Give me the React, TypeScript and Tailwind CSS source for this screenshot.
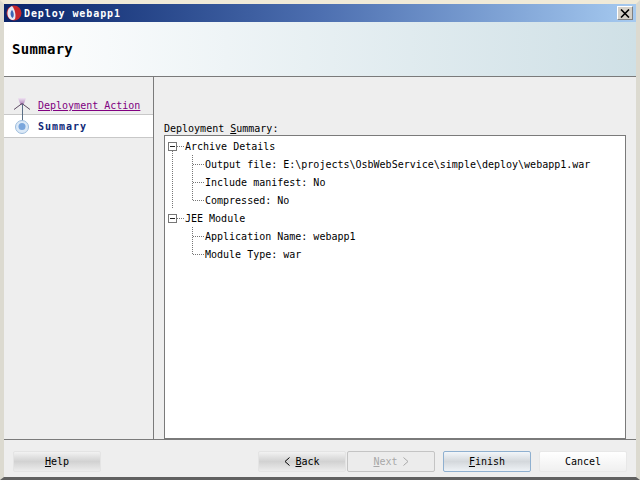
const mono = { fontFamily: '"DejaVu Sans Mono", "Liberation Mono", monospace' };

function AppIcon() {
  return (
    <svg width="16" height="16" viewBox="0 0 16 16" className="shrink-0">
      <circle cx="8" cy="8" r="7.5" fill="#c8262a" />
      <path d="M6 1 C1.5 3 0 9 3 13 C5 15.5 8 15.5 9 14 C10 11 9.5 5 6 1Z" fill="#e4e9f4" />
      <path d="M6 5 C4 7 4 11 6.5 13 C8.5 11.5 8 7 6 5Z" fill="#3c64b4" />
    </svg>
  );
}

function StepIcons() {
  return (
    <svg width="24" height="38" viewBox="0 0 24 38" className="absolute left-[6px] top-[94px]">
      <defs>
        <linearGradient id="flare" x1="0" y1="0" x2="0" y2="1">
          <stop offset="0" stopColor="#f0e4f2" />
          <stop offset="1" stopColor="#a878b4" />
        </linearGradient>
      </defs>
      <path d="M8 0 H16 L13.5 7 H10.5Z" fill="url(#flare)" />
      <path d="M4 11.5 L12 5.5 L20 11.5" stroke="#5c4a62" fill="none" />
      <path d="M12.5 6 V23" stroke="#5a6f86" />
      <circle cx="12" cy="29" r="6.5" fill="#dbe9f7" stroke="#9dbcdc" />
      <circle cx="12" cy="28.5" r="3.5" fill="#7aa6dc" />
    </svg>
  );
}

function TreeRow({ depth, last, open, text }: { depth: number; last?: boolean; open?: boolean; text: string }) {
  return (
    <div className="flex h-[18px] items-center">
      {depth === 0 ? (
        <svg width="20" height="18" viewBox="0 0 20 18" className="shrink-0">
          {open && <path d="M7.5 14 V18" stroke="#777" strokeDasharray="1 1" />}
          <rect x="3.5" y="5.5" width="8" height="8" fill="#fff" stroke="#777" />
          <path d="M5 9.5 H10" stroke="#222" />
          <path d="M12 9.5 H19" stroke="#777" strokeDasharray="1 1" />
        </svg>
      ) : (
        <svg width="40" height="18" viewBox="0 0 40 18" className="shrink-0">
          {open && <path d="M7.5 0 V18" stroke="#777" strokeDasharray="1 1" />}
          <path d={last ? 'M27.5 0 V9' : 'M27.5 0 V18'} stroke="#777" strokeDasharray="1 1" />
          <path d="M28 9.5 H39" stroke="#777" strokeDasharray="1 1" />
        </svg>
      )}
      <span className="whitespace-pre text-[10px] text-black">{text}</span>
    </div>
  );
}

function Button({ children, className }: { children: React.ReactNode; className: string }) {
  return (
    <button className={`flex h-[21px] w-[88px] items-center justify-center whitespace-pre rounded-[2px] text-[10px] ${className}`}>
      {children}
    </button>
  );
}

function Chevron({ flip }: { flip?: boolean }) {
  return (
    <svg width="6" height="9" viewBox="0 0 6 9" className={flip ? 'ml-[5px] rotate-180' : 'mr-[5px]'}>
      <path d="M5.5 0.5 L1 4.5 L5.5 8.5" stroke="currentColor" fill="none" />
    </svg>
  );
}

const greyButton = 'border border-[#e4e4e4] bg-gradient-to-b from-[#f2f2f2] via-[#d2d2d2] to-[#ececec] text-black';

export default function App() {
  return (
    <div style={mono} className="relative flex h-[480px] w-[640px] flex-col overflow-hidden border-x-4 border-t-4 border-b-[3px] border-x-[#dcdad0] border-t-[#f0ead8] border-b-[#606060] bg-[#eeeeee]">
      {/* Title bar */}
      <div className="flex h-[18px] shrink-0 items-center bg-gradient-to-r from-[#0a246a] via-[#4d6fb0] to-[#a6caf0] pl-[2px] pr-[3px]">
        <AppIcon />
        <span className="ml-[2px] whitespace-pre text-[10px] font-bold tracking-[0.9px] text-white">Deploy webapp1</span>
        <div className="ml-auto flex h-[14px] w-[16px] items-center justify-center border border-[#808080] border-l-white border-t-white bg-[#d4d0c8]">
          <svg width="10" height="9" viewBox="0 0 10 9">
            <path d="M1 0.5 L9 8.5 M9 0.5 L1 8.5" stroke="#000" strokeWidth="1.6" />
          </svg>
        </div>
      </div>

      {/* Header */}
      <div className="flex h-[55px] shrink-0 items-center border-b border-[#7a7a7a] bg-gradient-to-r from-white to-[#cfe0e6] pl-[8px]">
        <h1 className="text-[14px] font-bold tracking-[0.3px] text-black">Summary</h1>
      </div>

      {/* Body */}
      <div className="flex min-h-0 flex-1">
        <div className="flex w-[150px] shrink-0 flex-col border-r border-[#7a7a7a] pt-[20px]">
          <div className="flex h-[18px] items-center border-b border-[#c8c8c8] pl-[34px]">
            <span className="text-[10px] text-[#800080] underline">Deployment Action</span>
          </div>
          <div className="flex h-[23px] items-center border-b border-[#c8c8c8] bg-white pl-[34px]">
            <span className="text-[10px] font-bold tracking-[1px] text-[#0f2a78]">Summary</span>
          </div>
        </div>
        <div className="flex min-w-0 flex-1 flex-col pl-[10px] pr-[10px] pt-[45px]">
          <div className="h-[13px] whitespace-pre text-[10px] leading-[13px] text-black">
            Deployment <span className="underline">S</span>ummary:
          </div>
          <div className="min-h-0 flex-1 border border-[#7a7a7a] bg-white pt-[1px]">
            <TreeRow depth={0} open text="Archive Details" />
            <TreeRow depth={1} open text="Output file: E:\projects\OsbWebService\simple\deploy\webapp1.war" />
            <TreeRow depth={1} open text="Include manifest: No" />
            <TreeRow depth={1} open last text="Compressed: No" />
            <TreeRow depth={0} text="JEE Module" />
            <TreeRow depth={2} text="Application Name: webapp1" />
            <TreeRow depth={2} last text="Module Type: war" />
          </div>
        </div>
      </div>

      {/* Footer */}
      <div className="flex h-[38px] shrink-0 items-start border-t border-[#7a7a7a] pl-[9px] pr-[9px] pt-[11px]">
        <Button className={greyButton}>
          <span className="underline">H</span>elp
        </Button>
        <Button className={`ml-auto ${greyButton}`}>
          <Chevron />
          <span className="underline">B</span>ack
        </Button>
        <Button className="ml-px border border-[#c4c4c4] bg-[#ececec] text-[#a8a8a8]">
          <span className="underline">N</span>ext
          <Chevron flip />
        </Button>
        <Button className="ml-2 border border-[#8fb0d0] bg-gradient-to-b from-[#f2f6fa] via-[#d4d8dc] to-[#eef2f6] text-black">
          <span className="underline">F</span>inish
        </Button>
        <Button className="ml-2 border border-[#e8e8e8] bg-gradient-to-b from-white to-[#f0f0f0] text-black">Cancel</Button>
      </div>

      <StepIcons />
    </div>
  );
}
